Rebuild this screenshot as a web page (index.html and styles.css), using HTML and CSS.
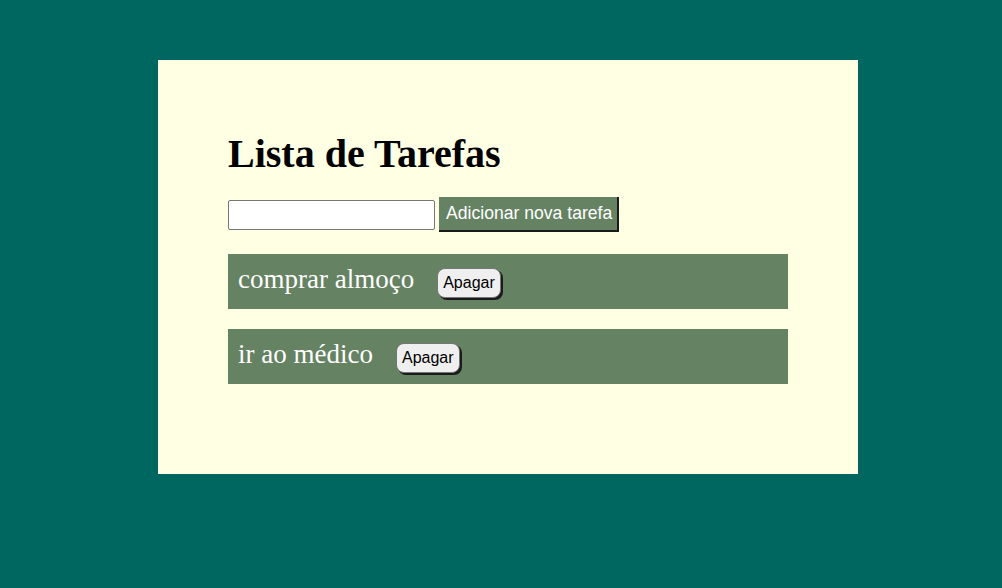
FILE: index.html
```html
<!DOCTYPE html>
<html lang="pt">
<head>
<meta charset="utf-8">
<title>Lista de Tarefas</title>
<link rel="stylesheet" href="styles.css">
</head>
<body>
<main class="card">
  <h1 class="title">Lista de Tarefas</h1>
  <form class="add-form">
    <input class="task-input" type="text">
    <button class="add-btn" type="button">Adicionar nova tarefa</button>
  </form>
  <ul class="task-list">
    <li class="task"><span class="task-text">comprar almoço</span><button class="del-btn" type="button">Apagar</button></li>
    <li class="task"><span class="task-text">ir ao médico</span><button class="del-btn" type="button">Apagar</button></li>
  </ul>
</main>
</body>
</html>
```
FILE: styles.css
```css
html, body {
  margin: 0;
  padding: 0;
}
body {
  background: #006660;
  font-family: "Liberation Serif", "Times New Roman", serif;
  padding: 60px 144px 114px 158px;
  min-height: 588px;
  box-sizing: border-box;
}
.card {
  width: 700px;
  box-sizing: border-box;
  background: #ffffe3;
  padding: 71px 70px 90px;
}
.title {
  font-size: 40px;
  font-weight: bold;
  margin: 0 0 20px;
  line-height: 46px;
}
.add-form {
  display: flex;
  align-items: center;
  gap: 4px;
  margin: 0 0 22px;
}
.task-input {
  width: 207px;
  height: 30px;
  box-sizing: border-box;
  border: 1px solid #767676;
  border-radius: 2px;
  background: #fff;
  margin: 0;
}
.add-btn {
  font-family: "Liberation Sans", Arial, sans-serif;
  font-size: 17.6px;
  color: #fff;
  background: #658263;
  border: none;
  border-right: 2px solid #1a1a1a;
  border-bottom: 2px solid #1a1a1a;
  height: 35px;
  padding: 0 5px 1px 7px;
  margin: 0;
}
.task-list {
  list-style: none;
  margin: 0;
  padding: 0;
  display: flex;
  flex-direction: column;
  gap: 20px;
}
.task {
  background: #658263;
  color: #fff;
  height: 55px;
  box-sizing: border-box;
  padding: 0 10px;
  display: flex;
  align-items: center;
  font-size: 27px;
}
.task-text {
  margin-right: 23px;
  margin-bottom: 4px;
}
.del-btn {
  font-family: "Liberation Sans", Arial, sans-serif;
  font-size: 16px;
  line-height: 18px;
  color: #000;
  background: #efefef;
  border: 1px solid #767676;
  border-radius: 8px;
  box-shadow: 2px 2px 0 #1a1a1a;
  padding: 5px 5px;
  margin-top: 3px;
}
```
